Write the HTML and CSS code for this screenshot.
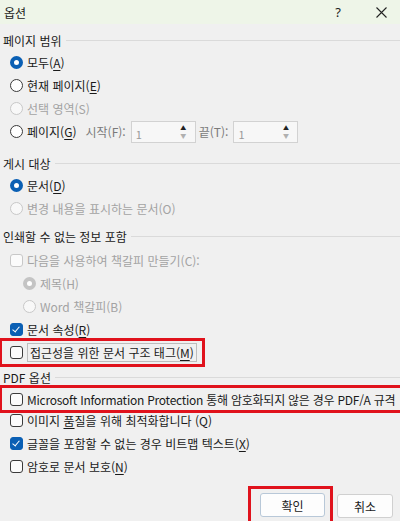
FILE: index.html
```html
<!DOCTYPE html>
<html lang="ko">
<head>
    <meta charset="UTF-8">
    <meta name="viewport" content="width=device-width, initial-scale=1.0">
    <title>옵션</title>
    <link rel="stylesheet" href="styles.css">
</head>
<body>
    <div class="titlebar">
        <span class="title">옵션</span>
        <span class="help">?</span>
        <svg class="close" width="11" height="11" viewBox="0 0 11 11">
            <path d="M0.5 0.5 L10.5 10.5 M10.5 0.5 L0.5 10.5" stroke="#222" stroke-width="1.1" fill="none"/>
        </svg>
    </div>

    <div class="content">
        <div class="group-title first"><span>페이지 범위</span></div>
        <div class="row"><span class="radio on"></span><span>모두(<u>A</u>)</span></div>
        <div class="row"><span class="radio"></span><span>현재 페이지(<u>E</u>)</span></div>
        <div class="row disabled"><span class="radio"></span><span>선택 영역(S)</span></div>
        <div class="row">
            <span class="radio"></span><span>페이지(<u>G</u>)</span>
            <span class="spin-label start">시작(F):</span>
            <span class="spin">
                <span class="spin-val">1</span>
                <span class="arrows"><span class="up">▲</span><span class="down">▼</span></span>
            </span>
            <span class="spin-label">끝(T):</span>
            <span class="spin">
                <span class="spin-val">1</span>
                <span class="arrows"><span class="up">▲</span><span class="down">▼</span></span>
            </span>
        </div>

        <div class="group-title second"><span>게시 대상</span></div>
        <div class="row"><span class="radio on"></span><span>문서(<u>D</u>)</span></div>
        <div class="row disabled"><span class="radio"></span><span>변경 내용을 표시하는 문서(O)</span></div>

        <div class="group-title third"><span>인쇄할 수 없는 정보 포함</span></div>
        <div class="row disabled"><span class="check"></span><span>다음을 사용하여 책갈피 만들기(C):</span></div>
        <div class="row disabled sub"><span class="radio dot"></span><span>제목(H)</span></div>
        <div class="row disabled sub"><span class="radio"></span><span>Word 책갈피(B)</span></div>
        <div class="row"><span class="check on"></span><span>문서 속성(<u>R</u>)</span></div>
        <div class="row marked short"><span class="check"></span><span class="focus">접근성을 위한 문서 구조 태그(<u>M</u>)</span></div>

        <div class="group-title fourth"><span>PDF 옵션</span></div>
        <div class="row marked wide"><span class="check"></span><span class="tight">Microsoft Information Protection 통해 암호화되지 않은 경우 PDF/A 규격</span></div>
        <div class="row"><span class="check"></span><span>이미지 <u>품</u>질을 위해 최적화합니다 (Q)</span></div>
        <div class="row"><span class="check on"></span><span>글꼴을 포함할 수 없는 경우 비트맵 텍스트(<u>X</u>)</span></div>
        <div class="row"><span class="check"></span><span>암호로 문서 보호(<u>N</u>)</span></div>

        <div class="buttons">
            <span class="btn-mark"><button class="btn default">확인</button></span>
            <button class="btn">취소</button>
        </div>
    </div>
</body>
</html>
```

FILE: styles.css
```css
body {
    margin: 0;
    width: 400px;
    height: 521px;
    overflow: hidden;
    background: #f0f0f0;
    font-family: "Noto Sans CJK KR", "Noto Sans", sans-serif;
    font-size: 12px;
    color: #1a1a1a;
}
u {
    text-decoration-thickness: 1px;
    text-underline-offset: 2px;
}
.titlebar {
    height: 24px;
    background: #eef5e8;
    display: flex;
    align-items: center;
    padding: 0 0 0 4px;
}
.title {
    font-size: 12px;
    flex: 1;
}
.help {
    font-size: 13px;
    margin-right: 35px;
    font-family: "Noto Sans", sans-serif;
}
.close {
    margin-right: 13px;
}
.content {
    padding: 0 0 0 3px;
}
.group-title {
    display: flex;
    align-items: center;
    height: 22px;
}
.group-title::after {
    content: "";
    flex: 1;
    border-top: 1px solid #dadada;
    margin-left: 4px;
}
.group-title.first { margin-top: 5px; }
.group-title.second { margin-top: 9px; }
.group-title.third { margin-top: 5px; }
.group-title.fourth { margin-top: 3px; }
.row {
    display: flex;
    align-items: center;
    height: 23px;
    padding-left: 7px;
    white-space: nowrap;
}
.third + .row { margin-top: 2px; }
.row.sub { padding-left: 20px; }
.row.disabled { color: #a3a3a3; }
.radio {
    width: 11px;
    height: 11px;
    border: 1px solid #3a3a3a;
    border-radius: 50%;
    background: #fff;
    margin-right: 4px;
    flex: none;
    box-sizing: content-box;
}
.radio.on {
    width: 5px;
    height: 5px;
    border: 4px solid #0a5fb4;
}
.disabled .radio {
    border-color: #c8c8c8;
    background: #f8f8f8;
}
.disabled .radio.dot {
    width: 5px;
    height: 5px;
    border: 4px solid #c4c4c4;
    background: #fff;
}
.check {
    width: 11px;
    height: 11px;
    border: 1px solid #3a3a3a;
    border-radius: 3px;
    background: #fbfbfb;
    margin-right: 4px;
    flex: none;
    position: relative;
}
.disabled .check {
    border-color: #c8c8c8;
}
.check.on {
    background: #0a5fb4;
    border-color: #0a5fb4;
}
.check.on::after {
    content: "";
    position: absolute;
    left: 3px;
    top: 1px;
    width: 3px;
    height: 6px;
    border: solid #fff;
    border-width: 0 1.2px 1.2px 0;
    transform: rotate(40deg);
}
.spin-label {
    color: #7a7a7a;
    margin: 0 5px 0 8px;
}
.spin-label.start {
    margin-left: 9px;
}
.spin {
    display: inline-flex;
    align-items: stretch;
    width: 63px;
    height: 20px;
    border: 1px solid #d2d2d2;
    background: #f7f7f7;
}
.spin + .spin-label { margin-left: 3px; }
.spin-val {
    flex: 1;
    color: #9a9a9a;
    padding: 5px 0 0 4px;
    font-size: 11px;
    line-height: 14px;
}
.arrows {
    width: 15px;
    display: flex;
    flex-direction: column;
    align-items: center;
    justify-content: center;
    font-size: 6px;
    line-height: 8px;
    margin-right: 4px;
}
.arrows .up { color: #222; }
.arrows .down { color: #b0b0b0; }
.row.marked {
    position: relative;
    align-self: flex-start;
}
.row.short {
    width: 191px;
    margin-top: 1px;
    height: 21px;
    outline: 3px solid #e0121c;
    outline-offset: 1px;
}
.row.wide {
    margin: 1px -10px 0 0;
    height: 20px;
    outline: 3px solid #e0121c;
    outline-offset: 1px;
}
.focus {
    border: 1px solid #bdbdbd;
    padding: 0 2px;
    line-height: 17px;
}
.tight {
    letter-spacing: -0.25px;
}
.buttons {
    display: flex;
    justify-content: flex-end;
    align-items: center;
    margin-top: 8px;
    padding-right: 7px;
    gap: 4px;
}
.btn-mark {
    border: 3px solid #e0121c;
    padding: 4px 5px 6px 9px;
}
.btn {
    font-family: inherit;
    font-size: 12px;
    width: 56px;
    height: 24px;
    border: 1px solid #d0d0d0;
    border-radius: 3px;
    background: #fdfdfd;
    color: #1a1a1a;
}
.btn.default {
    width: 65px;
    border-color: #b8c8d8;
}
```
